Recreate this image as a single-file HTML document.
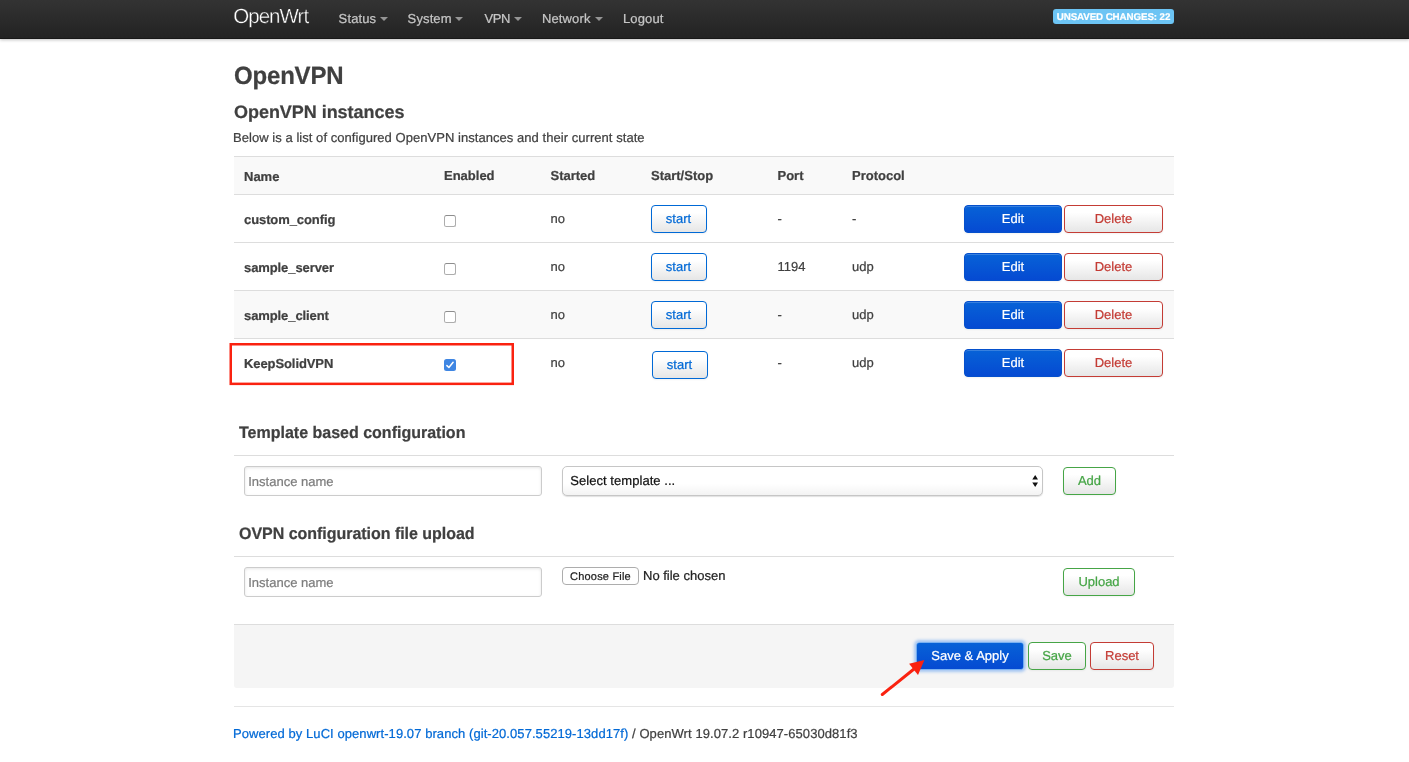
<!DOCTYPE html>
<html>
<head>
<meta charset="utf-8">
<title>OpenWrt - OpenVPN - LuCI</title>
<style>
*{box-sizing:border-box}
html,body{margin:0;padding:0}
body{width:1409px;height:762px;overflow:hidden;background:#fff;font-family:"Liberation Sans",sans-serif;font-size:13px;line-height:18px;color:#404040;position:relative}
body>*{will-change:transform;text-rendering:geometricPrecision;-webkit-text-stroke:.22px}
.abs{position:absolute;white-space:nowrap}
header{position:absolute;left:0;top:0;width:1409px;height:39px;background:#222;background-image:linear-gradient(#333,#222);box-shadow:0 1px 3px rgba(0,0,0,.25),inset 0 -1px 0 rgba(0,0,0,.3)}
.brand{position:absolute;left:233.2px;top:7px;font-size:20.5px;line-height:20px;color:#fff;letter-spacing:-.95px;white-space:nowrap;-webkit-text-stroke:.36px #2e2e2e}
.nav{position:absolute;top:9px;color:#c6c6c6;font-size:13px;line-height:19px;white-space:nowrap;letter-spacing:.12px;margin-left:-.4px}
.caret{position:absolute;top:17px;width:0;height:0;border-left:4px solid transparent;border-right:4px solid transparent;border-top:4px solid #fff;opacity:.5}
.badge{position:absolute;left:1053px;top:9px;width:121px;height:15px;border-radius:3px;background:#6cc4f4;color:#fff;font-weight:bold;font-size:9.75px;line-height:15px;text-align:center;letter-spacing:-.09px;text-rendering:geometricPrecision;white-space:nowrap}
h2{position:absolute;margin:0;left:234px;top:59px;transform:scaleY(1.04);transform-origin:0 25px;font-size:24px;line-height:36px;font-weight:bold;color:#404040;letter-spacing:-.18px;white-space:nowrap}
h3{position:absolute;margin:0;left:234px;top:94px;font-size:18px;line-height:36px;font-weight:bold;color:#404040;letter-spacing:-.04px;white-space:nowrap}
.descr{left:233.2px;top:129px;letter-spacing:.047px}
table{position:absolute;left:234px;top:156px;width:940px;border-collapse:collapse;table-layout:fixed}
th,td{padding:0 10px;text-align:left;vertical-align:middle;border-top:1px solid #ddd;font-size:13px;line-height:18px;white-space:nowrap}
th{font-weight:bold;height:38px}
td{height:48px}
tr.g{background:#f9f9f9}
td.n{font-weight:bold;letter-spacing:-.09px}
td.n span{position:relative;top:1px}
.cb{display:block;width:12px;height:12px;border:1px solid #adadad;border-top-color:#8e8e8e;border-radius:2.5px;background:#fff;margin-top:5px}
.cb.on{border:0;background:#3f86e3}
.btn{display:inline-block;height:28px;border:1px solid #ccc;border-bottom-color:#bbb;border-radius:4px;background:#e6e6e6;background-image:linear-gradient(#fff,#fff 25%,#e6e6e6);font-size:13px;line-height:26px;text-align:center;color:#333;box-shadow:inset 0 1px 0 rgba(255,255,255,.2),0 1px 2px rgba(0,0,0,.05);white-space:nowrap;vertical-align:top}
.btn.blue{color:#0069d6;border-color:#0069d6}
.btn.red{color:#c43c35;border-color:#c43c35}
.btn.green{color:#46a546;border-color:#46a546}
.btn.pri{color:#fff;border-color:#0550cc;background:#054ad2;background-image:linear-gradient(#0762d7,#054ad2)}
.start{width:56px;text-indent:-1px}
.edit{position:absolute;width:98px}
.del{position:absolute;width:99px}
.sec{left:238.5px;transform:translateY(.6px) scaleY(1.04);transform-origin:0 22px;font-size:16px;line-height:36px;font-weight:bold;color:#404040}
.hr{position:absolute;left:234px;width:940px;height:1px;background:#ddd}
.inp{position:absolute;left:244px;width:298px;height:30px;border:1px solid #ccc;border-radius:3px;background:#fff;box-shadow:inset 0 1px 3px rgba(0,0,0,.1);color:#7d7d7d;font-size:13px;line-height:30px;padding-left:3.25px;white-space:nowrap}
.sel{position:absolute;left:562px;top:466px;width:481px;height:30px;border:1px solid #c6c6c6;border-radius:5px;background:#fff;background-image:linear-gradient(#fff 60%,#f3f3f3);box-shadow:0 1px 1px rgba(0,0,0,.12);color:#111;font-size:13px;line-height:27px;letter-spacing:.05px;padding-left:7.25px;white-space:nowrap}
.file{position:absolute;left:562px;top:567px;width:77px;height:18px;border:1px solid #adadad;border-radius:4px;background:#fff;font-size:11px;line-height:18px;text-align:center;color:#222;letter-spacing:.2px;white-space:nowrap}
.actions{position:absolute;left:234px;top:624px;width:940px;height:64px;background:#f5f5f5;border-top:1px solid #ddd;border-radius:0 0 3px 3px}
a{color:#0069d6;text-decoration:none}
</style>
</head>
<body>
<header>
<div class="brand">OpenWrt</div>
<div class="nav" style="left:339px">Status</div><div class="caret" style="left:380px"></div>
<div class="nav" style="left:408px">System</div><div class="caret" style="left:455px"></div>
<div class="nav" style="left:485px;letter-spacing:-.5px">VPN</div><div class="caret" style="left:513.6px"></div>
<div class="nav" style="left:542.4px">Network</div><div class="caret" style="left:594.9px"></div>
<div class="nav" style="left:623.4px">Logout</div>
<div class="badge"><span style="display:inline-block;transform:translateY(.75px)">UNSAVED CHANGES: 22</span></div>
</header>

<h2>OpenVPN</h2>
<h3>OpenVPN instances</h3>
<div class="abs descr">Below is a list of configured OpenVPN instances and their current state</div>

<table>
<colgroup><col style="width:200px"><col style="width:106.5px"><col style="width:100.5px"><col style="width:126.5px"><col style="width:74.5px"><col style="width:111px"><col></colgroup>
<tr class="g"><th><span style="position:relative;top:1px">Name</span></th><th>Enabled</th><th>Started</th><th>Start/Stop</th><th>Port</th><th>Protocol</th><th></th></tr>
<tr><td class="n"><span>custom_config</span></td><td><span class="cb"></span></td><td>no</td><td><span class="btn blue start">start</span></td><td>-</td><td>-</td><td></td></tr>
<tr><td class="n"><span>sample_server</span></td><td><span class="cb"></span></td><td>no</td><td><span class="btn blue start">start</span></td><td>1194</td><td>udp</td><td></td></tr>
<tr class="g"><td class="n"><span>sample_client</span></td><td><span class="cb"></span></td><td>no</td><td><span class="btn blue start">start</span></td><td>-</td><td>udp</td><td></td></tr>
<tr><td class="n"><span>KeepSolidVPN</span></td><td><span class="cb on"><svg width="12" height="12" viewBox="0 0 12 12" style="display:block"><path d="M2.9 6.6 L4.9 8.5 L9.1 3.3" fill="none" stroke="#fff" stroke-width="1.5" stroke-linecap="round" stroke-linejoin="round"/></svg></span></td><td>no</td><td><span class="btn blue start" style="position:relative;left:1px;top:2px">start</span></td><td>-</td><td>udp</td><td></td></tr>
</table>

<span class="btn pri edit" style="left:964px;top:205px">Edit</span><span class="btn red del" style="left:1064px;top:205px">Delete</span>
<span class="btn pri edit" style="left:964px;top:253px">Edit</span><span class="btn red del" style="left:1064px;top:253px">Delete</span>
<span class="btn pri edit" style="left:964px;top:301px">Edit</span><span class="btn red del" style="left:1064px;top:301px">Delete</span>
<span class="btn pri edit" style="left:964px;top:349px">Edit</span><span class="btn red del" style="left:1064px;top:349px">Delete</span>


<div class="abs sec" style="top:415px">Template based configuration</div>
<div class="hr" style="top:455px"></div>
<div class="inp" style="top:466px">Instance name</div>
<div class="sel">Select template ...<svg style="position:absolute;right:3.6px;top:8px" width="6.4" height="12" viewBox="0 0 7 12" preserveAspectRatio="none"><path d="M3.5 0 L6.7 4.6 L0.3 4.6 Z M3.5 12 L6.7 7.4 L0.3 7.4 Z" fill="#111"/></svg></div>
<span class="btn green abs" style="left:1063px;top:467px;width:53px">Add</span>

<div class="abs sec" style="top:516px;letter-spacing:-.03px">OVPN configuration file upload</div>
<div class="hr" style="top:556px"></div>
<div class="inp" style="top:567px">Instance name</div>
<div class="file">Choose File</div>
<div class="abs" style="left:643.4px;top:567px;color:#222">No file chosen</div>
<span class="btn green abs" style="left:1063px;top:568px;width:72px">Upload</span>

<div class="actions"></div>
<span class="btn pri abs" style="left:917px;top:643px;width:106px;height:26px;line-height:26px;border:0;border-radius:2.5px;box-shadow:0 0 0 .6px #4d9bef,0 0 3px 2.5px rgba(100,160,240,.55)">Save &amp; Apply</span>
<span class="btn green abs" style="left:1028px;top:642px;width:58px">Save</span>
<span class="btn red abs" style="left:1090px;top:642px;width:64px">Reset</span>

<div class="hr" style="top:705.5px;background:#e5e5e5"></div>
<div class="abs" style="left:233.1px;top:725px;letter-spacing:.07px"><a>Powered by LuCI openwrt-19.07 branch (git-20.057.55219-13dd17f)</a> / OpenWrt 19.07.2 r10947-65030d81f3</div>
<svg class="abs" style="left:0;top:0" width="1409" height="762"><rect x="230.75" y="344.25" width="282" height="39.6" fill="none" stroke="#fa2210" stroke-width="2.5"/>
<line x1="882.3" y1="694.5" x2="914" y2="669" stroke="#fa2210" stroke-width="3" stroke-linecap="round"/>
<path d="M924.4 660.1 L909.1 663.8 L918 675 Z" fill="#fa2210"/></svg>
</body>
</html>
